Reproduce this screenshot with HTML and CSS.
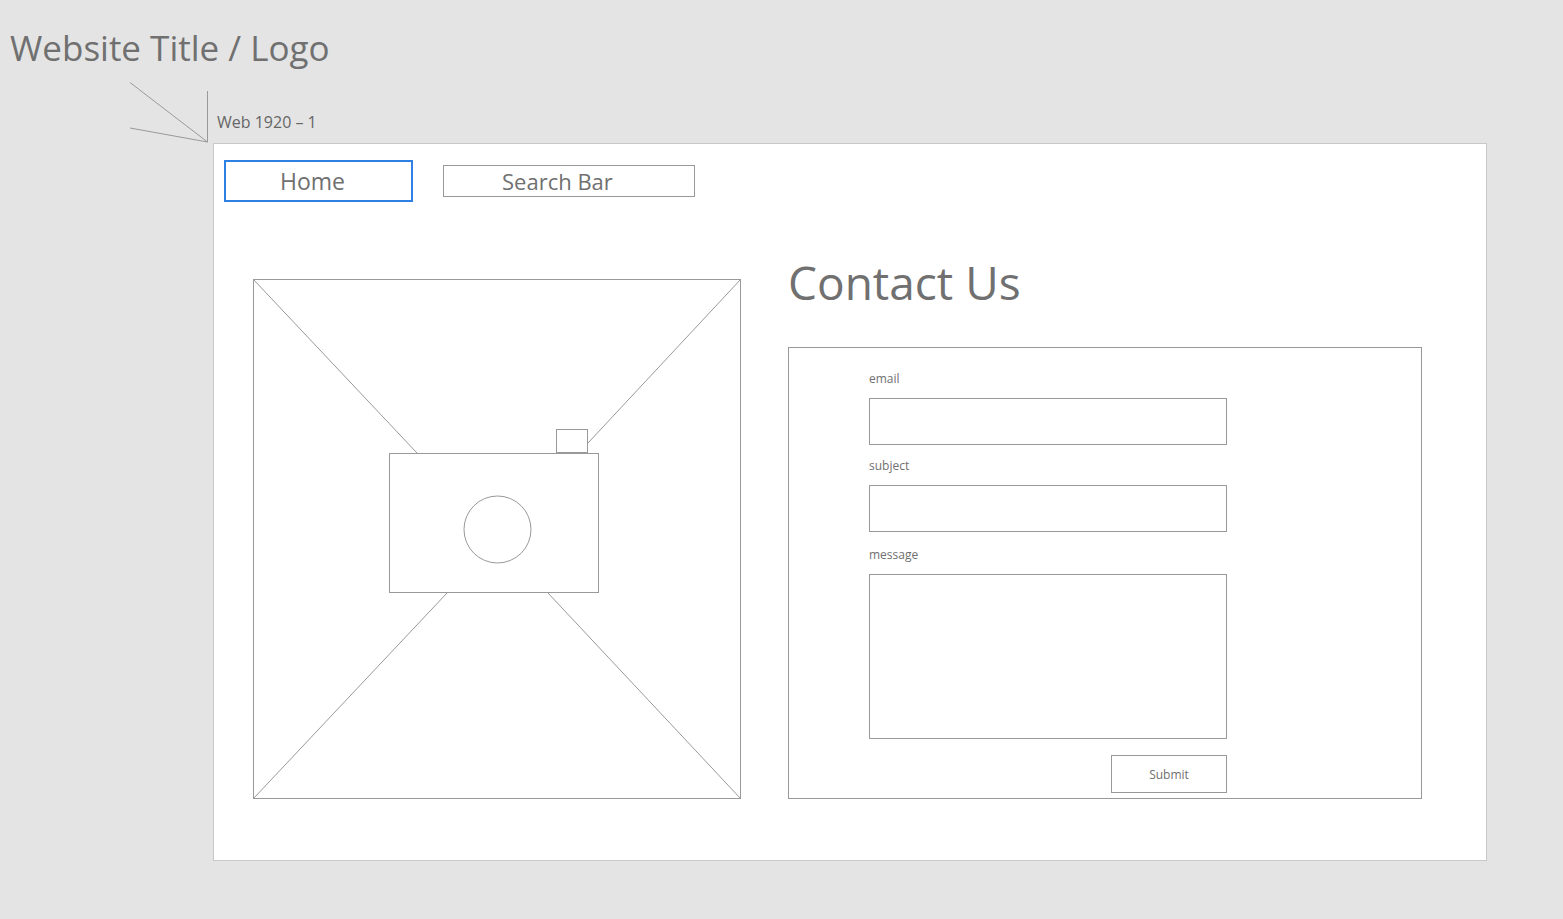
FILE: index.html
```html
<!DOCTYPE html>
<html lang="en">
<head>
<meta charset="utf-8">
<title>Contact Us wireframe</title>
<link rel="stylesheet" href="styles.css">
</head>
<body>
<header class="page-header">
  <h1 class="site-title">Website Title / Logo</h1>
  <div class="artboard-tag">
    <svg class="arrow" width="79" height="61" viewBox="0 0 79 61" aria-hidden="true">
      <path d="M0 .5L77.500 60L0 46M77.500 9V60"/>
    </svg>
    <span class="artboard-name">Web 1920 – 1</span>
  </div>
</header>
<main class="artboard">
  <nav class="toolbar">
    <button class="home" type="button">Home</button>
    <input class="search" type="search" aria-label="Search Bar" placeholder="Search Bar">
  </nav>
  <div class="content">
    <svg class="photo" viewBox="0 0 488 520" role="img" aria-label="Image placeholder">
      <rect x=".5" y=".5" width="487" height="519"/>
      <path d="M0 0L164 174M488 0L335 164M0 520L194 314M488 520L295 314"/>
      <rect x="303.5" y="150.5" width="31" height="23"/>
      <rect x="136.5" y="174.5" width="209" height="139"/>
      <circle cx="244.5" cy="250.5" r="33.5"/>
    </svg>
    <section class="contact">
      <h2 class="contact-title">Contact Us</h2>
      <form class="contact-form">
        <div class="field">
          <label for="email">email</label>
          <input id="email" class="box" type="email">
        </div>
        <div class="field">
          <label for="subject">subject</label>
          <input id="subject" class="box" type="text">
        </div>
        <div class="field field-message">
          <label for="message">message</label>
          <textarea id="message" class="box message"></textarea>
        </div>
        <button class="submit" type="submit">Submit</button>
      </form>
    </section>
  </div>
</main>
</body>
</html>
```
FILE: styles.css
```css
* {
  box-sizing: border-box;
}

body {
  margin: 0;
  background: #e4e4e4;
  color: #707070;
  font-family: "Open Sans", "Noto Sans", sans-serif;
}

h1, h2 {
  margin: 0;
  font-weight: 400;
}

button, input, textarea {
  margin: 0;
  border: 1px solid #999;
  border-radius: 0;
  background: #fff;
  color: inherit;
  font-family: inherit;
}

.page-header {
  padding: 24px 10px 0;
}

.site-title {
  font-size: 35px;
  line-height: 48px;
}

.artboard-tag {
  display: flex;
  align-items: flex-end;
  gap: 8px;
  margin: 10px 0 0 120px;
}

.arrow {
  fill: none;
  stroke: #999;
}

.artboard-name {
  padding-bottom: 9px;
  color: #666;
  font-size: 16px;
  line-height: 24px;
}

.artboard {
  margin: 0 76px 58px 213px;
  border: 1px solid #c8c8c8;
  background: #fff;
}

.toolbar {
  display: flex;
  align-items: center;
  gap: 30px;
  padding: 16px 10px 0;
}

.home {
  width: 189px;
  height: 42px;
  padding: 0 54px;
  border: 2px solid #2f80e4;
  font-size: 23px;
  line-height: 36px;
  text-align: left;
}

.search {
  width: 252px;
  height: 32px;
  padding: 0 58px;
  appearance: none;
  font-size: 22px;
}

.search::placeholder {
  color: #707070;
  opacity: 1;
}

.content {
  display: grid;
  grid-template-columns: 488fr 634fr;
  align-items: end;
  gap: 47px;
  padding: 48px 64px 61px 39px;
}

.photo {
  display: block;
  width: 100%;
  fill: #fff;
  stroke: #999;
}

.contact-title {
  margin-bottom: 33px;
  font-size: 46px;
  line-height: 64px;
}

.contact-form {
  display: flex;
  flex-direction: column;
  gap: 12px;
  padding: 22px 194px 5px 80px;
  border: 1px solid #999;
}

.field {
  display: flex;
  flex-direction: column;
  gap: 10px;
}

.field-message {
  padding-top: 2px;
}

.field label {
  font-size: 12px;
  line-height: 18px;
}

.box {
  width: 100%;
  height: 47px;
  padding: 8px;
  font-size: 12px;
}

.message {
  height: 165px;
  resize: none;
}

.submit {
  align-self: flex-end;
  width: 116px;
  height: 38px;
  margin-top: 4px;
  font-size: 12px;
}
```
